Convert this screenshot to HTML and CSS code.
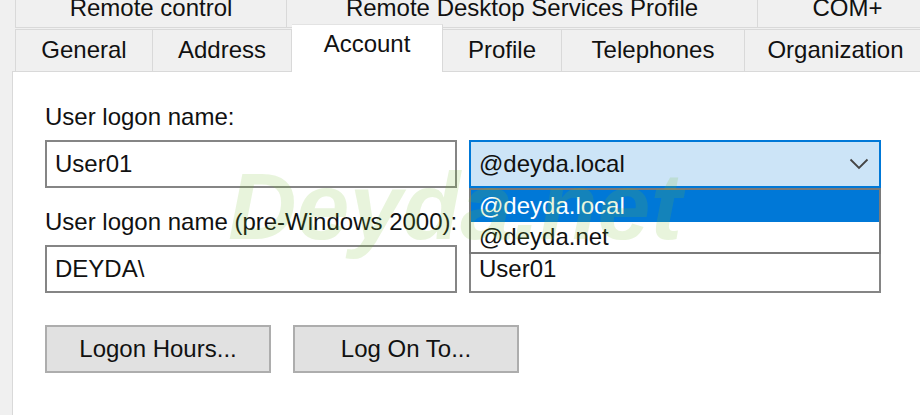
FILE: index.html
```html
<!DOCTYPE html>
<html lang="en">
  <head>
    <title>User Properties - Account</title>
    <meta charset="UTF-8">
    <link rel="stylesheet" href="styles.css">
  </head>
  <body>
    <div class="tabs">
      <div class="tab-row back">
        <div class="tab first w-remote">Remote control</div>
        <div class="tab w-rdsp">Remote Desktop Services Profile</div>
        <div class="tab w-com">COM+</div>
      </div>
      <div class="tab-row front">
        <div class="tab first w-general">General</div>
        <div class="tab w-address">Address</div>
        <div class="tab selected w-account">Account</div>
        <div class="tab w-profile">Profile</div>
        <div class="tab w-phones">Telephones</div>
        <div class="tab w-org">Organization</div>
      </div>
    </div>

    <div class="panel">
      <div class="label first-label">User logon name:</div>
      <div class="row">
        <div class="field">User01</div>
        <div class="combo">
          <span>@deyda.local</span>
          <svg class="chevron" width="20" height="12" viewBox="0 0 20 12">
            <polyline points="1.5,1.5 10,10 18.5,1.5" fill="none" stroke="#444" stroke-width="1.8"/>
          </svg>
          <ul class="dropdown">
            <li class="active">@deyda.local</li>
            <li>@deyda.net</li>
          </ul>
        </div>
      </div>

      <div class="label second-label">User logon name (pre-Windows 2000):</div>
      <div class="row">
        <div class="field">DEYDA\</div>
        <div class="field">User01</div>
      </div>

      <div class="buttons">
        <button class="btn">Logon Hours...</button>
        <button class="btn">Log On To...</button>
      </div>
    </div>

    <div class="watermark">Deyda.net</div>
  </body>
</html>
```

FILE: styles.css
```css
body {
  margin: 0;
  background: #f0f0f0;
  font-family: "Liberation Sans", Arial, sans-serif;
  font-size: 24px;
  color: #111;
  overflow: hidden;
  height: 415px;
}

/* tab strip, two rows */
.tabs {
  margin-top: -12px;
}

.tab-row {
  display: flex;
  padding-left: 15px;
  overflow: hidden;
}

.tab-row.back {
  height: 40px;
}

.tab-row.back .tab {
  height: 40px;
  border-bottom: 1px solid #d9d9d9;
}

.tab-row.front {
  height: 43px;
  align-items: flex-end;
  overflow: visible;
}

.tab {
  box-sizing: border-box;
  flex: none;
  display: flex;
  align-items: center;
  justify-content: center;
  background: #f0f0f0;
  border-right: 1px solid #d9d9d9;
  white-space: nowrap;
}

.tab.first {
  border-left: 1px solid #d9d9d9;
}

.tab-row.front .tab {
  height: 42px;
  border-top: 1px solid #d9d9d9;
  padding-bottom: 2px;
}

.tab-row.front .tab.selected {
  position: relative;
  z-index: 1;
  height: 48px;
  margin-bottom: -1px;
  padding-bottom: 10px;
  background: #fff;
  border-top-color: #e3e3e3;
}

.w-remote { width: 272px; }
.w-rdsp { width: 471px; }
.w-com { width: 180px; }
.w-general { width: 138px; }
.w-address { width: 139px; }
.w-account { width: 151px; }
.w-profile { width: 119px; }
.w-phones { width: 183px; }
.w-org { width: 182px; }

/* account page */
.panel {
  box-sizing: border-box;
  margin-left: 12px;
  height: 344px;
  background: #fff;
  border-top: 1px solid #d9d9d9;
  border-left: 1px solid #d9d9d9;
  padding: 32px 0 0 32px;
}

.label {
  line-height: 26px;
  height: 26px;
  white-space: nowrap;
}

.first-label {
  margin-bottom: 10px;
}

.second-label {
  margin-top: 21px;
  margin-bottom: 10px;
}

.row {
  display: flex;
  gap: 12px;
}

.field, .combo {
  box-sizing: border-box;
  width: 412px;
  height: 48px;
  line-height: 44px;
  padding-left: 8px;
  border: 2px solid #858585;
  background: #fff;
}

.combo {
  position: relative;
  display: flex;
  align-items: center;
  justify-content: space-between;
  padding-right: 10px;
  border-color: #0078d7;
  background: #cce4f7;
}

.dropdown {
  position: absolute;
  z-index: 2;
  top: 46px;
  left: -2px;
  width: 412px;
  box-sizing: border-box;
  margin: 0;
  padding: 0;
  list-style: none;
  background: #fff;
  border: 2px solid #7a7a7a;
  line-height: 30px;
}

.dropdown li {
  padding-left: 8px;
}

.dropdown li.active {
  background: #0078d7;
  color: #fff;
  line-height: 32px;
}

.buttons {
  display: flex;
  gap: 22px;
  margin-top: 32px;
}

.btn {
  box-sizing: border-box;
  width: 226px;
  height: 48px;
  padding: 0;
  font: inherit;
  color: #111;
  background: #e1e1e1;
  border: 2px solid #adadad;
}

/* site stamp over the shot */
.watermark {
  position: absolute;
  z-index: 5;
  left: 228px;
  top: 159px;
  font-size: 95px;
  line-height: 1;
  font-weight: bold;
  font-style: italic;
  color: rgba(120, 190, 50, 0.17);
  pointer-events: none;
  white-space: nowrap;
}
```
